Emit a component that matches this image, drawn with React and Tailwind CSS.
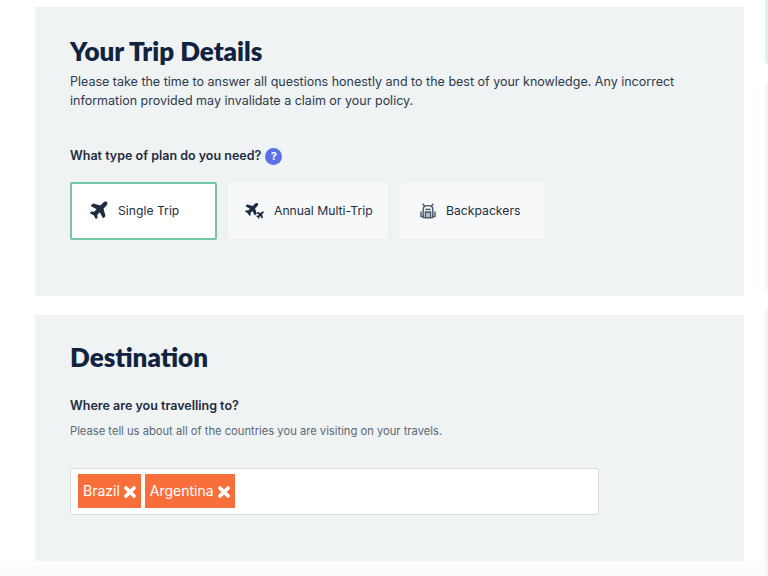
import { FaPlane } from 'react-icons/fa'

function PlanOption({ selected, width, gap, children, label }) {
  return (
    <div
      className={`h-[58px] flex items-center rounded-[2px] ${width} ${gap} ${
        selected
          ? 'bg-white border-2 border-[#74c6a4] pl-[18px]'
          : 'bg-[#f6f8f9] border border-[#eceff0] pl-[18px]'
      }`}
    >
      {children}
      <span className="text-[12.2px] text-[#1f2d3f]">{label}</span>
    </div>
  )
}

function Tag({ label }) {
  return (
    <div className="h-[34px] flex items-center gap-[4px] px-[5px] bg-[#f96f3c] text-white text-[14px]">
      <span>{label}</span>
      <svg viewBox="0 0 12 12" className="w-[12px] h-[12px] mt-[2px]">
        <path d="M2 2l8 8M10 2l-8 8" stroke="currentColor" strokeWidth="3.6" strokeLinecap="round" />
      </svg>
    </div>
  )
}

function BackpackIcon() {
  return (
    <svg viewBox="0 0 16 17" className="w-[16px] h-[17px] -mt-[1px] ml-[2px] text-[#47566a]" fill="none" stroke="currentColor" strokeWidth="1.4">
      <path d="M3 2.2l1.6 2M13 2.2l-1.6 2" strokeLinecap="round" />
      <path d="M3.2 7c0-2 1.6-3.4 4.8-3.4S12.8 5 12.8 7v8.6H3.2z" strokeLinejoin="round" />
      <path d="M1 9.5v5h2.2M15 9.5v5h-2.2" strokeLinejoin="round" />
      <path d="M5.4 10h5.2v5.6H5.4z" fill="currentColor" fillOpacity="0.35" />
      <path d="M5.4 7.4h5.2" />
    </svg>
  )
}

export default function App() {
  return (
    <div className="relative w-[768px] h-[576px] overflow-hidden font-['Inter',sans-serif] bg-gradient-to-b from-white from-[97%] to-[#fafafa]">
      <div className="flex">
        <div className="w-[709px] ml-[35px] pt-[7px] flex flex-col gap-[19px]">
          <section className="h-[289px] bg-[#f0f3f3] pl-[35px] pt-[29px]">
            <h1 className="font-['Lato',sans-serif] font-extrabold text-[26px] leading-[30px] text-[#10233f]">
              Your Trip Details
            </h1>
            <p className="mt-[6px] text-[12.5px] leading-[19px] text-[#2b3a4d] w-[630px]">
              Please take the time to answer all questions honestly and to the best of your knowledge. Any incorrect
              information provided may invalidate a claim or your policy.
            </p>
            <div className="mt-[37px] flex items-center gap-[4px]">
              <span className="text-[12.5px] font-semibold text-[#1d2c40]">What type of plan do you need?</span>
              <span className="w-[17px] h-[17px] rounded-full bg-[#5b6fe6] text-white text-[11px] font-bold flex items-center justify-center">
                ?
              </span>
            </div>
            <div className="mt-[16px] flex gap-[10px]">
              <PlanOption selected width="w-[147px]" gap="gap-[8px]" label="Single Trip">
                <FaPlane className="w-[20px] h-[20px] -mt-[3px] -rotate-45 text-[#1d2c40]" />
              </PlanOption>
              <PlanOption width="w-[162px]" gap="gap-[9px]" label="Annual Multi-Trip">
                <div className="relative w-[20px] h-[18px] -mt-[2px] -ml-[1px]">
                  <FaPlane className="w-[15px] h-[15px] -rotate-45 text-[#1d2c40]" />
                  <FaPlane className="absolute right-0 bottom-0 w-[9px] h-[9px] -rotate-45 text-[#1d2c40]" />
                </div>
              </PlanOption>
              <PlanOption width="w-[147px]" gap="gap-[10px]" label="Backpackers">
                <BackpackIcon />
              </PlanOption>
            </div>
          </section>
          <section className="h-[246px] bg-[#f0f3f3] pl-[35px] pt-[27px]">
            <h2 className="font-['Lato',sans-serif] font-extrabold text-[26px] leading-[30px] text-[#10233f]">Destination</h2>
            <p className="mt-[24px] text-[12.5px] font-semibold leading-[19px] text-[#1d2c40]">
              Where are you travelling to?
            </p>
            <p className="mt-[8px] text-[11.2px] leading-[16px] text-[#5a6775]">
              Please tell us about all of the countries you are visiting on your travels.
            </p>
            <div className="mt-[29px] w-[529px] h-[47px] bg-white border border-[#d9dcdd] rounded-[3px] flex items-center gap-[4px] pl-[7px] pb-[2px]">
              <Tag label="Brazil" />
              <Tag label="Argentina" />
            </div>
          </section>
        </div>
        <div className="ml-[21px] flex-1 flex flex-col">
          <div className="h-[64px] bg-[#dcf5e6] rounded-bl-[4px]" />
          <div className="mt-[20px] h-[205px] bg-[#eef3fd] rounded-tl-[4px]" />
          <div className="mt-[19px] h-[268px] bg-[#f3f2fd] rounded-tl-[4px]" />
        </div>
      </div>
    </div>
  )
}
